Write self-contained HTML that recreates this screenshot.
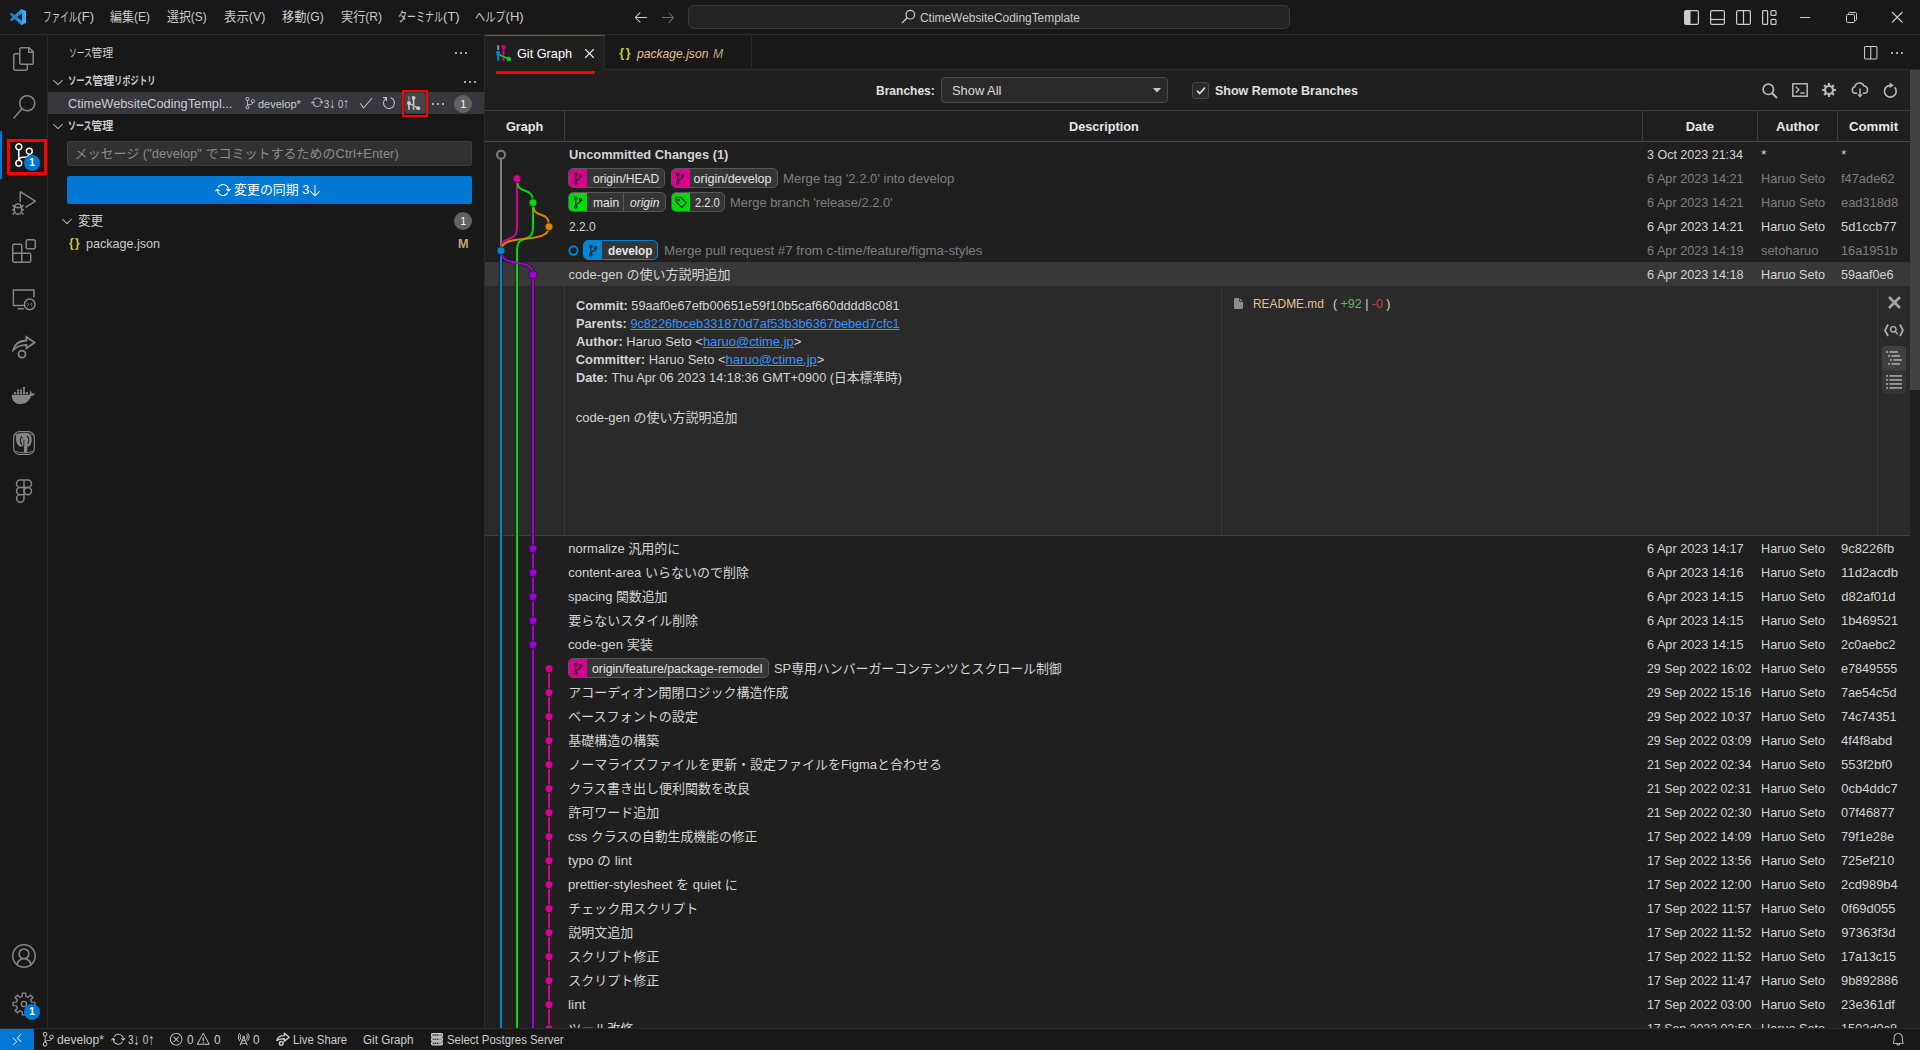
<!DOCTYPE html>
<html lang="ja"><head><meta charset="utf-8"><title>Git Graph - CtimeWebsiteCodingTemplate - Visual Studio Code</title><style>
*{box-sizing:border-box;margin:0;padding:0}
html,body{width:1920px;height:1050px;overflow:hidden;background:#181818}
body{position:relative;font-family:"Liberation Sans","Noto Sans CJK JP",sans-serif;font-size:13px;color:#cccccc}
.t{position:absolute;white-space:pre;transform-origin:0 50%;display:block}
.b{position:absolute}
svg{position:absolute;overflow:visible}
.ref{position:absolute;height:20px;border:1px solid #585858;border-radius:5px;background:#353535;overflow:hidden}
.ref i{position:absolute;left:0;top:0;bottom:0;width:18px}
.ref u{position:absolute;top:0;bottom:0;width:1px;background:#585858}
a{color:#3794ff;text-decoration:underline}
.ar{font-size:1.3em;line-height:0;position:relative;top:.03em}
</style></head><body>
<div class="b" style="left:0px;top:34px;width:1920px;height:1px;background:#2b2b2b;"></div>
<div class="b" style="left:47px;top:35px;width:1px;height:993px;background:#2b2b2b;"></div>
<div class="b" style="left:484px;top:35px;width:1px;height:993px;background:#2b2b2b;"></div>
<div class="b" style="left:485px;top:35px;width:1435px;height:35px;background:#181818;"></div>
<div class="b" style="left:485px;top:69px;width:1435px;height:1px;background:#2b2b2b;"></div>
<div class="b" style="left:485px;top:70px;width:1435px;height:958px;background:#1f1f1f;"></div>
<svg style="left:10px;top:9px;" width="16" height="16" viewBox="0 0 100 100"><defs><linearGradient id="vsg" x1="0" x2="1" y1="0" y2="0"><stop offset="0" stop-color="#1a7cc0"/><stop offset=".55" stop-color="#1f8fdc"/><stop offset="1" stop-color="#41b4ff"/></linearGradient></defs><path fill="url(#vsg)" fill-rule="evenodd" d="M70.9119 99.3171C72.4869 99.9307 74.2828 99.8914 75.8725 99.1264L96.4608 89.2197C98.6242 88.1787 100 85.9892 100 83.5872V16.4133C100 14.0113 98.6243 11.8218 96.4609 10.7808L75.8725 0.873756C73.7862 -0.130129 71.3446 0.11576 69.5135 1.44695C69.252 1.63711 69.0028 1.84943 68.769 2.08341L29.3551 38.0415L12.1872 25.0096C10.589 23.7965 8.35363 23.8959 6.86933 25.2461L1.36303 30.2549C-0.452552 31.9064 -0.454633 34.7627 1.35853 36.417L16.2471 50.0001L1.35853 63.5832C-0.454633 65.2374 -0.452552 68.0938 1.36303 69.7453L6.86933 74.7541C8.35363 76.1043 10.589 76.2037 12.1872 74.9905L29.3551 61.9587L68.769 97.9167C69.3925 98.5406 70.1246 99.0104 70.9119 99.3171ZM75.0152 27.2989L45.1091 50.0001L75.0152 72.7012V27.2989Z"/></svg>
<span class="t" style="left:43px;top:7.2px;line-height:20px;"><span style="display:inline-block;transform:scaleX(0.660);transform-origin:0 50%;margin-right:-17.66px">ファイル</span>(F)</span>
<span class="t" style="left:110px;top:7.2px;line-height:20px;transform:scaleX(0.9229);">編集(E)</span>
<span class="t" style="left:167px;top:7.2px;line-height:20px;transform:scaleX(0.9159);">選択(S)</span>
<span class="t" style="left:223.7px;top:7.2px;line-height:20px;transform:scaleX(0.9528);">表示(V)</span>
<span class="t" style="left:281.7px;top:7.2px;line-height:20px;transform:scaleX(0.9334);">移動(G)</span>
<span class="t" style="left:340.6px;top:7.2px;line-height:20px;transform:scaleX(0.9331);">実行(R)</span>
<span class="t" style="left:398px;top:7.2px;line-height:20px;"><span style="display:inline-block;transform:scaleX(0.693);transform-origin:0 50%;margin-right:-19.96px">ターミナル</span>(T)</span>
<span class="t" style="left:475px;top:7.2px;line-height:20px;"><span style="display:inline-block;transform:scaleX(0.783);transform-origin:0 50%;margin-right:-8.48px">ヘルプ</span>(H)</span>
<svg style="left:632.8px;top:9px;" width="16" height="16" viewBox="0 0 16 16"><path fill="#cccccc" fill-rule="evenodd" d="M7 3.093l-5 5V8.800l5 5 .707-.707-4.146-4.147H14v-1H3.560L7.707 3.800 7 3.093z"/></svg>
<svg style="left:659.5px;top:9px;" width="16" height="16" viewBox="0 0 16 16"><path fill="#6a6a6a" fill-rule="evenodd" d="M9 13.887l5-5V8.180l-5-5-.707.707 4.146 4.147H2v1h10.440L8.293 13.180l.707.707z"/></svg>
<div class="b" style="left:688px;top:5.4px;width:602px;height:23.3px;background:#242424;border:1px solid #3a3a3a;border-radius:6px;"></div>
<svg style="left:901px;top:9px;" width="15" height="15" viewBox="0 0 15 15"><circle cx="9.3" cy="5.700" r="4.300" fill="none" stroke="#cccccc" stroke-width="1.2"/><path d="M6.300 8.700 1 14" stroke="#cccccc" stroke-width="1.3" fill="none"/></svg>
<span class="t" style="left:920px;top:7.6px;line-height:20px;font-size:12px;transform:scaleX(0.9926);">CtimeWebsiteCodingTemplate</span>
<svg style="left:1684px;top:10px;" width="15" height="15" viewBox="0 0 15 15"><rect x=".6" y=".6" width="13.8" height="13.8" rx="1.5" fill="none" stroke="#cccccc" stroke-width="1.2"/><path d="M1 1h5.500v13H1z" fill="#cccccc"/></svg>
<svg style="left:1709.5px;top:10px;" width="15" height="15" viewBox="0 0 15 15"><rect x=".6" y=".6" width="13.8" height="13.8" rx="1.500" fill="none" stroke="#cccccc" stroke-width="1.2"/><path d="M.6 9.500h13.800" stroke="#cccccc" stroke-width="1.200"/></svg>
<svg style="left:1735.5px;top:10px;" width="15" height="15" viewBox="0 0 15 15"><rect x=".6" y=".6" width="13.800" height="13.800" rx="1.500" fill="none" stroke="#cccccc" stroke-width="1.200"/><path d="M7.500 .6v13.800" stroke="#cccccc" stroke-width="1.200"/></svg>
<svg style="left:1762px;top:10px;" width="15" height="15" viewBox="0 0 15 15"><rect x=".6" y=".6" width="5" height="13.800" rx="1" fill="none" stroke="#cccccc" stroke-width="1.200"/><rect x="9" y=".6" width="5" height="4.800" rx="1" fill="none" stroke="#cccccc" stroke-width="1.200"/><rect x="9" y="9.400" width="5" height="5" rx="1" fill="none" stroke="#cccccc" stroke-width="1.200"/></svg>
<svg style="left:1800px;top:17px;" width="10" height="1" viewBox="0 0 10 1"><rect width="10" height="1" fill="#cccccc"/></svg>
<svg style="left:1845.5px;top:12px;" width="11" height="11" viewBox="0 0 11 11"><rect x=".5" y="2.500" width="8" height="8" rx="1" fill="none" stroke="#cccccc"/><path d="M2.500 2.500v-1a1 1 0 0 1 1-1h6a1 1 0 0 1 1 1v6a1 1 0 0 1-1 1h-1" fill="none" stroke="#cccccc"/></svg>
<svg style="left:1892px;top:12px;" width="10.5" height="10.5" viewBox="0 0 10.5 10.5"><path d="M0 0l10.500 10.500M10.500 0 0 10.500" stroke="#cccccc" stroke-width="1.100"/></svg>
<svg style="left:12px;top:47px;" width="24" height="24" viewBox="0 0 24 24"><g fill="#868686" stroke="none"><path d="M17.5 0h-9L7 1.5V6H2.5L1 7.5v15.070L2.5 24h12.070L16 22.570V18h4.700l1.300-1.430V4.500L17.500 0zm0 2.120l2.380 2.380H17.500V2.120zm-3 20.380h-12v-15H7v9.070L8.500 18h6v4.500zm6-6h-12v-15H16V6h4.500v10.500z"/></g></svg>
<svg style="left:12px;top:95px;" width="24" height="24" viewBox="0 0 24 24"><g fill="#868686" stroke="none"><path d="M15.250 0a8.250 8.250 0 0 0-6.180 13.720L1 22.880l1.120 1 8.050-9.120A8.251 8.251 0 1 0 15.250.010V0zm0 15a6.750 6.750 0 1 1 0-13.500 6.750 6.750 0 0 1 0 13.500z"/></g></svg>
<div class="b" style="left:0px;top:131px;width:2px;height:48px;background:#0078d4;"></div>
<svg style="left:12px;top:143px;" width="24" height="24" viewBox="0 0 24 24"><g fill="#ffffff" stroke="none"><path d="M21.007 8.222A3.738 3.738 0 0 0 15.045 5.200a3.737 3.737 0 0 0 1.156 6.583 2.988 2.988 0 0 1-2.668 1.670h-2.990a4.456 4.456 0 0 0-2.989 1.165V7.400a3.737 3.737 0 1 0-1.494 0v9.117a3.776 3.776 0 1 0 1.816.099 2.990 2.990 0 0 1 2.668-1.667h2.990a4.484 4.484 0 0 0 4.223-3.039 3.736 3.736 0 0 0 3.250-3.687zM4.565 3.738a2.242 2.242 0 1 1 4.484 0 2.242 2.242 0 0 1-4.484 0zm4.484 16.441a2.242 2.242 0 1 1-4.484 0 2.242 2.242 0 0 1 4.484 0zm8.221-9.715a2.242 2.242 0 1 1 0-4.485 2.242 2.242 0 0 1 0 4.485z"/></g></svg>
<div class="b" style="left:24px;top:155px;width:16px;height:16px;background:#0078d4;border-radius:8px;"></div>
<span class="t" style="left:29.3px;top:157.4px;line-height:12px;font-size:10px;color:#ffffff;font-weight:bold;">1</span>
<div class="b" style="left:7px;top:139px;width:40px;height:36px;border:3px solid #ff0000;"></div>
<svg style="left:12px;top:191px;" width="24" height="24" viewBox="0 0 24 24"><g fill="#868686" stroke="none"><path d="M10.940 13.500l-1.320 1.320a3.730 3.730 0 0 0-7.240 0L1.060 13.500 0 14.560l1.720 1.720-.220.220V18H0v1.500h1.500v.080c.077.489.214.966.410 1.420L0 22.940 1.060 24l1.650-1.650A4.308 4.308 0 0 0 6 24a4.310 4.310 0 0 0 3.290-1.650L10.940 24 12 22.940 10.090 21c.198-.464.336-.951.410-1.450v-.100H12V18h-1.500v-1.500l-.220-.220L12 14.560l-1.060-1.060zM6 13.500a2.250 2.250 0 0 1 2.250 2.250h-4.500A2.250 2.250 0 0 1 6 13.500zm3 6a3.330 3.330 0 0 1-3 3 3.330 3.330 0 0 1-3-3v-2.250h6v2.250zm14.760-9.900v1.260L13.500 17.370V15.600l8.500-5.370L9 2v9.460a5.070 5.070 0 0 0-1.500-.720V.630L8.640 0l15.120 9.600z"/></g></svg>
<svg style="left:12px;top:239px;" width="24" height="24" viewBox="0 0 24 24"><g fill="#868686" stroke="none"><path d="M13.500 1.500L15 0h7.500L24 1.500V9l-1.500 1.500H15L13.500 9V1.500zm1.500 0V9h7.500V1.500H15zM0 15V6l1.500-1.500H9L10.500 6v7.500H18l1.500 1.500v7.500L18 24H1.500L0 22.500V15zm9-1.500V6H1.500v7.500H9zM9 15H1.500v7.500H9V15zm1.500 7.500H18V15h-7.500v7.500z"/></g></svg>
<svg style="left:12px;top:287px;" width="24" height="24" viewBox="0 0 24 24"><g fill="none" stroke="#868686" stroke-width="1.500"><path d="M11.800 18.400H1.400V2.900h20.600v7.300"/><path d="M5.500 21.700h6.300"/><circle cx="17.700" cy="17.400" r="5.300"/><path d="M15.200 15.900l1.600 1.500-1.600 1.500M20.200 15.900l-1.600 1.500 1.600 1.500" stroke-width="1"/></g></svg>
<svg style="left:12px;top:335px;" width="24" height="24" viewBox="0 0 24 24"><g fill="none" stroke="#868686" stroke-width="1.800" stroke-linejoin="miter"><path d="M1.300 15C2.500 9.500 7 5.800 14.400 5.500V1.900l8.200 5.500-8.200 5.800V9.900C8.500 10.100 4.500 11.800 1.300 15z"/><circle cx="10" cy="19.200" r="3.500"/></g></svg>
<svg style="left:11px;top:386px;" width="26" height="19" viewBox="0 0 26 19"><g fill="#868686"><path d="M.700 8.700h17.800c.800-1.300.800-3.200.200-4.600 1.300.900 1.900 2 2 3.200 1.200-.300 2.500-.100 3.400.500-.700 1.600-2.200 2.300-4 2.200C18.500 14.700 15 18 9.500 18 4 18 .500 14.500.700 8.700z"/><rect x="3" y="6.100" width="2.150" height="2.050"/><rect x="5.95" y="6.100" width="2.150" height="2.050"/><rect x="8.9" y="6.100" width="2.150" height="2.050"/><rect x="11.85" y="6.100" width="2.150" height="2.050"/><rect x="14.8" y="6.100" width="2.150" height="2.050"/><rect x="5.95" y="3.600" width="2.150" height="2.050"/><rect x="8.9" y="3.600" width="2.150" height="2.050"/><rect x="11.85" y="3.600" width="2.150" height="2.050"/><rect x="11.85" y="1" width="2.150" height="2.150"/></g></svg>
<svg style="left:13px;top:431px;" width="22" height="24" viewBox="0 0 22 24"><g fill="none" stroke="#868686" stroke-width="1.200"><rect x=".700" y=".700" width="20.600" height="22.600" rx="5.500"/><path d="M1.200 4.500C4 1.800 18 1.800 20.800 4.500M1.200 19.500C4 22.200 18 22.200 20.800 19.500" stroke-width=".900"/></g><path fill="#868686" d="M3 5.500C3 3 6 2.300 9 3c2-.900 5-.900 7 .300 3 1.200 3.500 5.200 2 9.200-.500 2-1.500 3-2.500 3-.600 0-1-.500-1-1.500l-.300 6c0 2-3.200 2-3.200 0L10.800 14c-1.300 1.500-3.300 2-4.300 1.500C4 14 2.500 9.500 3 5.500z"/><g fill="none" stroke="#181818" stroke-width="1.100" stroke-linecap="round"><path d="M8.600 5.500C7 7.500 7 11 8.700 13.500"/><path d="M14.300 5.300c1.600 1.500 1.800 4.700.500 7.500"/><path d="M10.900 14.500V9.500" stroke-width=".800"/></g><circle cx="9.800" cy="7" r=".600" fill="#181818"/></svg>
<svg style="left:15px;top:479px;" width="18" height="24" viewBox="0 0 18 24"><g fill="none" stroke="#868686" stroke-width="1.500"><path d="M9 1H5.200a3.700 3.700 0 0 0 0 7.400H9zM9 1h3.800a3.700 3.700 0 0 1 0 7.400H9zM9 8.400H5.200a3.700 3.700 0 0 0 0 7.400H9zM9 15.800H5.200A3.700 3.700 0 1 0 9 19.500z"/><circle cx="12.800" cy="12.100" r="3.700"/></g></svg>
<svg style="left:12px;top:944px;" width="24" height="24" viewBox="0 0 16 16"><path fill="#868686" fill-rule="evenodd" d="M16 7.992C16 3.580 12.416 0 8 0S0 3.580 0 7.992c0 2.430 1.104 4.620 2.832 6.090.016.016.032.016.032.032.144.112.288.224.448.336.080.048.144.111.224.175A7.980 7.980 0 0 0 8.016 16a7.980 7.980 0 0 0 4.480-1.375c.080-.048.144-.111.224-.160.144-.111.304-.223.448-.335.016-.016.032-.016.032-.032 1.696-1.487 2.800-3.676 2.800-6.106zm-8 7.001c-1.504 0-2.880-.480-4.016-1.279.016-.128.048-.255.080-.383a4.170 4.170 0 0 1 .416-.991c.176-.304.384-.576.640-.816.240-.240.528-.463.816-.639.304-.176.624-.304.976-.400A4.150 4.150 0 0 1 8 10.342a4.185 4.185 0 0 1 2.928 1.166c.368.368.656.800.864 1.295.112.288.192.592.240.911A7.030 7.030 0 0 1 8 14.993zm-2.448-7.400a2.490 2.490 0 0 1-.208-1.024c0-.351.064-.703.208-1.023.144-.320.336-.607.576-.847.240-.240.528-.431.848-.575.320-.144.672-.208 1.024-.208.368 0 .704.064 1.024.208.320.144.608.336.848.575.240.240.432.528.576.847.144.320.208.672.208 1.023 0 .368-.064.704-.208 1.023a2.840 2.840 0 0 1-.576.848 2.840 2.840 0 0 1-.848.575 2.715 2.715 0 0 1-2.064 0 2.840 2.840 0 0 1-.848-.575 2.526 2.526 0 0 1-.560-.848zm7.424 5.306c0-.032-.016-.048-.016-.080a5.220 5.220 0 0 0-.688-1.406 4.883 4.883 0 0 0-1.088-1.135 5.207 5.207 0 0 0-1.040-.608 2.820 2.820 0 0 0 .464-.383 4.200 4.200 0 0 0 .624-.784 3.624 3.624 0 0 0 .528-1.934 3.710 3.710 0 0 0-.288-1.470 3.799 3.799 0 0 0-.816-1.199 3.845 3.845 0 0 0-1.200-.800 3.720 3.720 0 0 0-1.472-.287 3.720 3.720 0 0 0-1.472.288 3.631 3.631 0 0 0-1.200.815 3.840 3.840 0 0 0-.800 1.199 3.710 3.710 0 0 0-.288 1.470c0 .352.048.688.144 1.007.096.336.224.640.400.927.160.288.384.544.624.784.144.144.304.271.480.383a5.120 5.120 0 0 0-1.040.624c-.416.320-.784.703-1.088 1.119a4.999 4.999 0 0 0-.688 1.406c-.016.032-.016.064-.016.080C1.776 11.636.992 9.910.992 7.992.992 4.140 4.144.991 8 .991s7.008 3.149 7.008 7.001a6.960 6.960 0 0 1-2.032 4.907z"/></svg>
<svg style="left:12px;top:992px;" width="24" height="24" viewBox="0 0 24 24"><g fill="none" stroke="#868686" stroke-width="1.400" stroke-linejoin="round"><path d="M19.57 10.12L22.88 10.36L22.88 13.64L19.57 13.88L18.68 16.02L20.85 18.54L18.54 20.85L16.02 18.68L13.88 19.57L13.64 22.88L10.36 22.88L10.12 19.57L7.98 18.68L5.46 20.85L3.15 18.54L5.32 16.02L4.43 13.88L1.12 13.64L1.12 10.36L4.43 10.12L5.32 7.98L3.15 5.46L5.46 3.15L7.98 5.32L10.12 4.43L10.36 1.12L13.64 1.12L13.88 4.43L16.02 5.32L18.54 3.15L20.85 5.46L18.68 7.98Z"/><circle cx="12" cy="12" r="2.600"/></g></svg>
<div class="b" style="left:24px;top:1004px;width:16px;height:16px;background:#0078d4;border-radius:8px;"></div>
<span class="t" style="left:29.3px;top:1006.4px;line-height:12px;font-size:10px;color:#ffffff;font-weight:bold;">1</span>
<span class="t" style="left:68.6px;top:43.1px;line-height:20px;font-size:11px;"><span style="display:inline-block;transform:scaleX(0.705);transform-origin:0 50%;margin-right:-9.73px">ソース</span>管理</span>
<svg style="left:453px;top:45px;" width="16" height="16" viewBox="0 0 16 16"><circle cx="3" cy="8" r="1.050" fill="#cccccc"/><circle cx="8" cy="8" r="1.050" fill="#cccccc"/><circle cx="13" cy="8" r="1.050" fill="#cccccc"/></svg>
<svg style="left:50px;top:73.5px;" width="16" height="16" viewBox="0 0 16 16"><path d="M7.976 10.072l4.357-4.357.620.618L8.284 11h-.618L3 6.333l.619-.618 4.357 4.357z" fill="#cccccc"/></svg>
<span class="t" style="left:68px;top:71.1px;line-height:20px;font-size:11px;font-weight:bold;"><span style="display:inline-block;transform:scaleX(0.754);transform-origin:0 50%;margin-right:-8.11px">ソース</span>管理<span style="display:inline-block;transform:scaleX(0.754);transform-origin:0 50%;margin-right:-13.52px">リポジトリ</span></span>
<svg style="left:462px;top:73.5px;" width="16" height="16" viewBox="0 0 16 16"><circle cx="3" cy="8" r="1.050" fill="#cccccc"/><circle cx="8" cy="8" r="1.050" fill="#cccccc"/><circle cx="13" cy="8" r="1.050" fill="#cccccc"/></svg>
<div class="b" style="left:48px;top:92px;width:436px;height:22px;background:#37373d;"></div>
<span class="t" style="left:68px;top:93.6px;line-height:20px;transform:scaleX(0.9821);">CtimeWebsiteCodingTempl...</span>
<svg style="left:243.5px;top:97.3px;" width="12.3" height="12.3" viewBox="0 0 24 24"><path fill="#cccccc" fill-rule="evenodd" d="M21.007 8.222A3.738 3.738 0 0 0 15.045 5.200a3.737 3.737 0 0 0 1.156 6.583 2.988 2.988 0 0 1-2.668 1.670h-2.990a4.456 4.456 0 0 0-2.989 1.165V7.400a3.737 3.737 0 1 0-1.494 0v9.117a3.776 3.776 0 1 0 1.816.099 2.990 2.990 0 0 1 2.668-1.667h2.990a4.484 4.484 0 0 0 4.223-3.039 3.736 3.736 0 0 0 3.250-3.687zM4.565 3.738a2.242 2.242 0 1 1 4.484 0 2.242 2.242 0 0 1-4.484 0zm4.484 16.441a2.242 2.242 0 1 1-4.484 0 2.242 2.242 0 0 1 4.484 0zm8.221-9.715a2.242 2.242 0 1 1 0-4.485 2.242 2.242 0 0 1 0 4.485z"/></svg>
<span class="t" style="left:258px;top:93.6px;line-height:20px;font-size:11px;">develop*</span>
<svg style="left:310.6px;top:96.3px;" width="12.6" height="12.6" viewBox="0 0 16 16"><path fill="#cccccc" fill-rule="evenodd" d="M2.006 8.267L.78 9.5 0 8.73l2.09-2.07.76.01 2.09 2.12-.76.76-1.167-1.18a5 5 0 0 0 9.4 1.983l.813.597a6 6 0 0 1-11.22-2.683zm10.99-.466L11.76 6.55l-.76.76 2.09 2.11.76.01 2.09-2.07-.75-.76-1.194 1.18a6 6 0 0 0-11.11-2.92l.81.594a5 5 0 0 1 9.3 2.346z"/></svg>
<span class="t" style="left:324.4px;top:93.6px;line-height:20px;font-size:11px;transform:scaleX(0.8506);">3<span class="ar">↓</span> 0<span class="ar">↑</span></span>
<svg style="left:357.6px;top:94.7px;" width="16" height="16" viewBox="0 0 16 16"><path fill="#cccccc" fill-rule="evenodd" d="M14.431 3.323l-8.47 10-.79-.036-3.35-4.77.818-.574 2.978 4.24 8.051-9.506.764.646z"/></svg>
<svg style="left:381px;top:94.7px;" width="16" height="16" viewBox="0 0 16 16"><path fill="#cccccc" fill-rule="evenodd" d="M4.681 3H2V2h3.5l.5.5V6H5V4a5 5 0 1 0 4.530-.761l.302-.954A6 6 0 1 1 4.681 3z"/></svg>
<div class="b" style="left:405px;top:93px;width:20px;height:20px;background:#45454a;border-radius:3px;"></div>
<svg style="left:407.2px;top:96px;" width="14" height="14" viewBox="0 0 16 16"><path d="M2.200 .200v4.700" stroke="#8a8a8a" stroke-width="1.800"/><path d="M2.200 7.900v7.900" stroke="#d0d0d0" stroke-width="1.800"/><path d="M7.500 2v8.300M7.500 12.300v3.500" stroke="#d0d0d0" stroke-width="1.800"/><path d="M3.200 8.800l9.600 5.100" stroke="#d0d0d0" stroke-width="1.400"/><circle cx="2.200" cy="7.900" r="2.200" fill="#d0d0d0"/><circle cx="7.500" cy="2.100" r="2.150" fill="#d0d0d0"/><circle cx="12.800" cy="13.900" r="2.200" fill="#d0d0d0"/></svg>
<div class="b" style="left:402px;top:90px;width:26px;height:26.5px;border:2.500px solid #ff0000;"></div>
<svg style="left:430px;top:95.5px;" width="16" height="16" viewBox="0 0 16 16"><circle cx="3" cy="8" r="1.050" fill="#cccccc"/><circle cx="8" cy="8" r="1.050" fill="#cccccc"/><circle cx="13" cy="8" r="1.050" fill="#cccccc"/></svg>
<div class="b" style="left:454px;top:94.5px;width:18px;height:18px;background:#616161;border-radius:9px;"></div>
<span class="t" style="left:460.2px;top:96.6px;line-height:14px;font-size:11px;color:#f8f8f8;">1</span>
<svg style="left:50px;top:118px;" width="16" height="16" viewBox="0 0 16 16"><path d="M7.976 10.072l4.357-4.357.620.618L8.284 11h-.618L3 6.333l.619-.618 4.357 4.357z" fill="#cccccc"/></svg>
<span class="t" style="left:68px;top:116.1px;line-height:20px;font-size:11px;font-weight:bold;"><span style="display:inline-block;transform:scaleX(0.723);transform-origin:0 50%;margin-right:-9.13px">ソース</span>管理</span>
<div class="b" style="left:67px;top:140.5px;width:405px;height:25.3px;background:#313131;border:1px solid #3c3c3c;border-radius:2px;"></div>
<span class="t" style="left:74.5px;top:143.5px;line-height:20px;color:#8c8c8c;">メッセージ ("develop" でコミットするためのCtrl+Enter)</span>
<div class="b" style="left:67px;top:176px;width:405px;height:28px;background:#0078d4;border-radius:2px;"></div>
<svg style="left:214.8px;top:182px;" width="16" height="16" viewBox="0 0 16 16"><path fill="#ffffff" fill-rule="evenodd" d="M2.006 8.267L.78 9.5 0 8.73l2.09-2.07.76.01 2.09 2.12-.76.76-1.167-1.18a5 5 0 0 0 9.4 1.983l.813.597a6 6 0 0 1-11.22-2.683zm10.99-.466L11.76 6.55l-.76.76 2.09 2.11.76.01 2.09-2.07-.75-.76-1.194 1.18a6 6 0 0 0-11.11-2.92l.81.594a5 5 0 0 1 9.3 2.346z"/></svg>
<span class="t" style="left:234.4px;top:180.1px;line-height:20px;color:#ffffff;transform:scaleX(0.9955);">変更の同期 3</span>
<svg style="left:306.8px;top:182.5px;" width="15" height="15" viewBox="0 0 16 16"><path fill="#ffffff" fill-rule="evenodd" d="M3.147 9l5 5h.707l5-5-.707-.707-4.147 4.147V2h-1v10.440L3.854 8.293 3.147 9z"/></svg>
<svg style="left:59px;top:213px;" width="16" height="16" viewBox="0 0 16 16"><path d="M7.976 10.072l4.357-4.357.620.618L8.284 11h-.618L3 6.333l.619-.618 4.357 4.357z" fill="#cccccc"/></svg>
<span class="t" style="left:78.4px;top:210.8px;line-height:20px;transform:scaleX(0.9686);">変更</span>
<div class="b" style="left:454px;top:211.7px;width:18px;height:18px;background:#616161;border-radius:9px;"></div>
<span class="t" style="left:460.2px;top:213.8px;line-height:14px;font-size:11px;color:#f8f8f8;">1</span>
<span class="t" style="left:68.6px;top:232.9px;line-height:20px;font-size:12.5px;color:#cbcb41;font-weight:bold;transform:scaleX(0.9502);letter-spacing:1.500px;">{}</span>
<span class="t" style="left:86px;top:233.5px;line-height:20px;transform:scaleX(0.9657);">package.json</span>
<span class="t" style="left:458.4px;top:233.5px;line-height:20px;font-size:12px;color:#bda57c;font-weight:bold;transform:scaleX(1.0600);">M</span>
<div class="b" style="left:485px;top:35px;width:120px;height:35px;background:#1f1f1f;border-top:1px solid #0078d4;border-right:1px solid #2b2b2b;"></div>
<div class="b" style="left:751px;top:35px;width:1px;height:34px;background:#2b2b2b;"></div>
<svg style="left:495.5px;top:45px;" width="16" height="16" viewBox="0 0 16 16"><path d="M2.200 .200v4.700" stroke="#9a9a9a" stroke-width="1.900"/><path d="M2.200 7.900v7.900" stroke="#0085d9" stroke-width="1.900"/><path d="M7.500 2v8.300M7.500 12.300v3.500" stroke="#d9008f" stroke-width="1.900"/><path d="M3.500 9.700l9.300 4.200" stroke="#00d90a" stroke-width="1.700"/><circle cx="2.200" cy="7.900" r="2.200" fill="#0085d9"/><circle cx="7.500" cy="2.100" r="2.150" fill="#d9008f"/><circle cx="12.800" cy="13.900" r="2.200" fill="#00d90a"/></svg>
<span class="t" style="left:517.2px;top:43.9px;line-height:20px;color:#ffffff;transform:scaleX(0.9759);">Git Graph</span>
<svg style="left:581.3px;top:44.5px;" width="17" height="17" viewBox="0 0 16 16"><path fill="#ffffff" fill-rule="evenodd" d="M8 8.707l3.646 3.647.708-.707L8.707 8l3.647-3.646-.707-.708L8 7.293 4.354 3.646l-.707.708L7.293 8l-3.646 3.646.707.708L8 8.707z"/></svg>
<div class="b" style="left:496px;top:71px;width:99.2px;height:3px;background:#ff0000;"></div>
<span class="t" style="left:619.3px;top:43.2px;line-height:20px;font-size:12.5px;color:#cbcb41;font-weight:bold;letter-spacing:1.500px;">{}</span>
<span class="t" style="left:636.8px;top:43.9px;line-height:20px;color:#e2c08d;font-style:italic;transform:scaleX(0.9318);">package.json</span>
<span class="t" style="left:713.3px;top:43.9px;line-height:20px;font-size:12px;color:#b8a57e;font-style:italic;transform:scaleX(1.0200);">M</span>
<svg style="left:1862.3px;top:44.8px;" width="16.5" height="16.5" viewBox="0 0 16 16"><path fill="#d0d0d0" fill-rule="evenodd" d="M14 1H3L2 2v11l1 1h11l1-1V2l-1-1zM8 13H3V2h5v11zm6 0H9V2h5v11z"/></svg>
<svg style="left:1889.3px;top:45px;" width="16" height="16" viewBox="0 0 16 16"><circle cx="3" cy="8" r="1.050" fill="#cccccc"/><circle cx="8" cy="8" r="1.050" fill="#cccccc"/><circle cx="13" cy="8" r="1.050" fill="#cccccc"/></svg>
<span class="t" style="left:875.7px;top:80.9px;line-height:20px;color:#e0e0e0;font-weight:bold;transform:scaleX(0.9248);">Branches:</span>
<div class="b" style="left:941px;top:77px;width:227px;height:25.5px;background:#2a2a2a;border:1px solid #4a4a4a;border-radius:4px;"></div>
<span class="t" style="left:952px;top:80.6px;line-height:20px;color:#dddddd;transform:scaleX(0.9905);">Show All</span>
<svg style="left:1153px;top:87.5px;" width="8" height="5" viewBox="0 0 8 5"><path d="M0 0h8L4 4.500z" fill="#c8c8c8"/></svg>
<div class="b" style="left:1192px;top:82px;width:16.5px;height:16.5px;background:#2a2a2a;border:1px solid #4a4a4a;border-radius:3px;"></div>
<svg style="left:1195.5px;top:86px;" width="10" height="9" viewBox="0 0 10 9"><path d="M1 4.700l2.700 2.800L9 1.500" fill="none" stroke="#e0e0e0" stroke-width="1.700"/></svg>
<span class="t" style="left:1214.8px;top:80.9px;line-height:20px;color:#e0e0e0;font-weight:bold;transform:scaleX(0.9608);">Show Remote Branches</span>
<svg style="left:1762px;top:83px;" width="16" height="16" viewBox="0 0 16 16"><circle cx="6.300" cy="6.300" r="5.200" fill="none" stroke="#b8b8b8" stroke-width="1.700"/><path d="M10 10l5 5" stroke="#b8b8b8" stroke-width="2.100"/></svg>
<svg style="left:1792px;top:83px;" width="16" height="14" viewBox="0 0 16 14"><rect x=".800" y=".800" width="14.400" height="12.400" fill="none" stroke="#b8b8b8" stroke-width="1.500"/><path d="M3.800 3.800l3 3-3 3M8.300 10h4.300" fill="none" stroke="#b8b8b8" stroke-width="1.400"/></svg>
<svg style="left:1822px;top:83px;" width="14" height="14" viewBox="0 0 14 14"><path fill-rule="evenodd" fill="#b8b8b8" d="M11.98 5.89L13.91 5.90L13.91 8.10L11.98 8.11L11.31 9.73L12.66 11.11L11.11 12.66L9.73 11.31L8.11 11.98L8.10 13.91L5.90 13.91L5.89 11.98L4.27 11.31L2.89 12.66L1.34 11.11L2.69 9.73L2.02 8.11L0.09 8.10L0.09 5.90L2.02 5.89L2.69 4.27L1.34 2.89L2.89 1.34L4.27 2.69L5.89 2.02L5.90 0.09L8.10 0.09L8.11 2.02L9.73 2.69L11.11 1.34L12.66 2.89L11.31 4.27Z M7 4.100a2.900 2.900 0 1 0 0 5.800 2.900 2.900 0 0 0 0-5.800z"/></svg>
<svg style="left:1851px;top:82px;" width="18" height="16" viewBox="0 0 18 16"><g fill="none" stroke="#b8b8b8" stroke-width="1.500"><path d="M6.300 11.300H4.300A3.300 3.300 0 0 1 3.800 4.800 4.800 4.800 0 0 1 13 4.100 3.700 3.700 0 0 1 14 11.300h-2.300"/><path d="M9 6.500v7.500"/></g><path d="M6.300 12.500h5.400L9 15.800z" fill="#b8b8b8"/></svg>
<svg style="left:1883px;top:82px;" width="15" height="16" viewBox="0 0 15 16"><g fill="none" stroke="#b8b8b8" stroke-width="1.700"><path d="M11.700 5.200A5.900 5.900 0 1 1 6.800 3.300"/></g><path d="M6.600 .400 10.800 3.300 6.600 6.200z" fill="#b8b8b8"/></svg>
<div class="b" style="left:485px;top:110px;width:1425px;height:1px;background:#3c3c3c;"></div>
<div class="b" style="left:564px;top:111px;width:1px;height:30px;background:#3c3c3c;"></div>
<div class="b" style="left:1642px;top:111px;width:1px;height:30px;background:#3c3c3c;"></div>
<div class="b" style="left:1757px;top:111px;width:1px;height:30px;background:#3c3c3c;"></div>
<div class="b" style="left:1837px;top:111px;width:1px;height:30px;background:#3c3c3c;"></div>
<div class="b" style="left:485px;top:141px;width:1425px;height:1px;background:#4a4a4a;"></div>
<span class="t" style="left:506px;top:116.9px;line-height:20px;color:#e7e7e7;font-weight:bold;transform:scaleX(0.9740);">Graph</span>
<span class="t" style="left:1068.6px;top:116.9px;line-height:20px;color:#e7e7e7;font-weight:bold;transform:scaleX(0.9760);">Description</span>
<span class="t" style="left:1685.7px;top:116.9px;line-height:20px;color:#e7e7e7;font-weight:bold;">Date</span>
<span class="t" style="left:1775.7px;top:116.9px;line-height:20px;color:#e7e7e7;font-weight:bold;transform:scaleX(1.0162);">Author</span>
<span class="t" style="left:1849.2px;top:116.9px;line-height:20px;color:#e7e7e7;font-weight:bold;transform:scaleX(1.0167);">Commit</span>
<div class="b" style="left:1910px;top:70px;width:10px;height:958px;background:#1f1f1f;"></div>
<div class="b" style="left:1910px;top:70px;width:10px;height:320px;background:#424242;"></div>
<div class="b" style="left:485px;top:262px;width:1425px;height:24px;background:#383838;"></div>
<div class="b" style="left:485px;top:286px;width:1425px;height:250px;background:#2a2a2a;"></div>
<div class="b" style="left:564px;top:286px;width:1px;height:249px;background:#3a3a3a;"></div>
<div class="b" style="left:1221px;top:286px;width:1px;height:249px;background:#3a3a3a;"></div>
<div class="b" style="left:1877px;top:286px;width:1px;height:249px;background:#3a3a3a;"></div>
<div class="b" style="left:485px;top:535px;width:1425px;height:1px;background:#3f3f3f;"></div>
<span class="t" style="left:568.6px;top:145.1px;line-height:20px;color:#d4d4d4;font-weight:bold;transform:scaleX(0.9896);">Uncommitted Changes (1)</span>
<span class="t" style="left:1646.7px;top:145.1px;line-height:20px;color:#d4d4d4;transform:scaleX(0.9624);">3 Oct 2023 21:34</span>
<span class="t" style="left:1761px;top:145.1px;line-height:20px;color:#d4d4d4;transform:scaleX(1.0864);">*</span>
<span class="t" style="left:1841.3px;top:145.1px;line-height:20px;color:#d4d4d4;">*</span>
<span class="t" style="left:782.7px;top:169.1px;line-height:20px;color:#7f7f7f;transform:scaleX(1.0091);">Merge tag '2.2.0' into develop</span>
<span class="t" style="left:1646.7px;top:169.1px;line-height:20px;color:#7f7f7f;transform:scaleX(0.9754);">6 Apr 2023 14:21</span>
<span class="t" style="left:1761px;top:169.1px;line-height:20px;color:#7f7f7f;transform:scaleX(0.9732);">Haruo Seto</span>
<span class="t" style="left:1841.3px;top:169.1px;line-height:20px;color:#7f7f7f;transform:scaleX(0.9875);">f47ade62</span>
<span class="t" style="left:730.3px;top:193.1px;line-height:20px;color:#7f7f7f;transform:scaleX(0.9924);">Merge branch 'release/2.2.0'</span>
<span class="t" style="left:1646.7px;top:193.1px;line-height:20px;color:#7f7f7f;transform:scaleX(0.9754);">6 Apr 2023 14:21</span>
<span class="t" style="left:1761px;top:193.1px;line-height:20px;color:#7f7f7f;transform:scaleX(0.9732);">Haruo Seto</span>
<span class="t" style="left:1841.3px;top:193.1px;line-height:20px;color:#7f7f7f;transform:scaleX(0.9877);">ead318d8</span>
<span class="t" style="left:568.6px;top:217.1px;line-height:20px;color:#d4d4d4;transform:scaleX(0.9197);">2.2.0</span>
<span class="t" style="left:1646.7px;top:217.1px;line-height:20px;color:#d4d4d4;transform:scaleX(0.9754);">6 Apr 2023 14:21</span>
<span class="t" style="left:1761px;top:217.1px;line-height:20px;color:#d4d4d4;transform:scaleX(0.9732);">Haruo Seto</span>
<span class="t" style="left:1841.3px;top:217.1px;line-height:20px;color:#d4d4d4;transform:scaleX(0.9882);">5d1ccb77</span>
<span class="t" style="left:663.6px;top:241.1px;line-height:20px;color:#7f7f7f;transform:scaleX(1.0225);">Merge pull request #7 from c-time/feature/figma-styles</span>
<span class="t" style="left:1646.7px;top:241.1px;line-height:20px;color:#7f7f7f;transform:scaleX(0.9754);">6 Apr 2023 14:19</span>
<span class="t" style="left:1761px;top:241.1px;line-height:20px;color:#7f7f7f;transform:scaleX(0.9909);">setoharuo</span>
<span class="t" style="left:1841.3px;top:241.1px;line-height:20px;color:#7f7f7f;transform:scaleX(0.9803);">16a1951b</span>
<span class="t" style="left:568.6px;top:265.1px;line-height:20px;color:#d4d4d4;">code-gen の使い方説明追加</span>
<span class="t" style="left:1646.7px;top:265.1px;line-height:20px;color:#d4d4d4;transform:scaleX(0.9754);">6 Apr 2023 14:18</span>
<span class="t" style="left:1761px;top:265.1px;line-height:20px;color:#d4d4d4;transform:scaleX(0.9732);">Haruo Seto</span>
<span class="t" style="left:1841.3px;top:265.1px;line-height:20px;color:#d4d4d4;transform:scaleX(0.9686);">59aaf0e6</span>
<span class="t" style="left:568.3px;top:539.1px;line-height:20px;color:#d4d4d4;">normalize 汎用的に</span>
<span class="t" style="left:1646.7px;top:539.1px;line-height:20px;color:#d4d4d4;transform:scaleX(0.9754);">6 Apr 2023 14:17</span>
<span class="t" style="left:1761px;top:539.1px;line-height:20px;color:#d4d4d4;transform:scaleX(0.9732);">Haruo Seto</span>
<span class="t" style="left:1841.3px;top:539.1px;line-height:20px;color:#d4d4d4;transform:scaleX(0.9935);">9c8226fb</span>
<span class="t" style="left:568.3px;top:563.1px;line-height:20px;color:#d4d4d4;">content-area いらないので削除</span>
<span class="t" style="left:1646.7px;top:563.1px;line-height:20px;color:#d4d4d4;transform:scaleX(0.9754);">6 Apr 2023 14:16</span>
<span class="t" style="left:1761px;top:563.1px;line-height:20px;color:#d4d4d4;transform:scaleX(0.9732);">Haruo Seto</span>
<span class="t" style="left:1841.3px;top:563.1px;line-height:20px;color:#d4d4d4;transform:scaleX(1.0146);">11d2acdb</span>
<span class="t" style="left:568.3px;top:587.1px;line-height:20px;color:#d4d4d4;transform:scaleX(0.9898);">spacing 関数追加</span>
<span class="t" style="left:1646.7px;top:587.1px;line-height:20px;color:#d4d4d4;transform:scaleX(0.9754);">6 Apr 2023 14:15</span>
<span class="t" style="left:1761px;top:587.1px;line-height:20px;color:#d4d4d4;transform:scaleX(0.9732);">Haruo Seto</span>
<span class="t" style="left:1841.3px;top:587.1px;line-height:20px;color:#d4d4d4;">d82af01d</span>
<span class="t" style="left:568.3px;top:611.1px;line-height:20px;color:#d4d4d4;">要らないスタイル削除</span>
<span class="t" style="left:1646.7px;top:611.1px;line-height:20px;color:#d4d4d4;transform:scaleX(0.9754);">6 Apr 2023 14:15</span>
<span class="t" style="left:1761px;top:611.1px;line-height:20px;color:#d4d4d4;transform:scaleX(0.9732);">Haruo Seto</span>
<span class="t" style="left:1841.3px;top:611.1px;line-height:20px;color:#d4d4d4;transform:scaleX(0.9870);">1b469521</span>
<span class="t" style="left:568.3px;top:635.1px;line-height:20px;color:#d4d4d4;transform:scaleX(1.0140);">code-gen 実装</span>
<span class="t" style="left:1646.7px;top:635.1px;line-height:20px;color:#d4d4d4;transform:scaleX(0.9754);">6 Apr 2023 14:15</span>
<span class="t" style="left:1761px;top:635.1px;line-height:20px;color:#d4d4d4;transform:scaleX(0.9732);">Haruo Seto</span>
<span class="t" style="left:1841.3px;top:635.1px;line-height:20px;color:#d4d4d4;transform:scaleX(0.9663);">2c0aebc2</span>
<span class="t" style="left:774px;top:659.1px;line-height:20px;color:#d4d4d4;transform:scaleX(0.9909);">SP専用ハンバーガーコンテンツとスクロール制御</span>
<span class="t" style="left:1646.7px;top:659.1px;line-height:20px;color:#d4d4d4;transform:scaleX(0.9500);">29 Sep 2022 16:02</span>
<span class="t" style="left:1761px;top:659.1px;line-height:20px;color:#d4d4d4;transform:scaleX(0.9732);">Haruo Seto</span>
<span class="t" style="left:1841.3px;top:659.1px;line-height:20px;color:#d4d4d4;transform:scaleX(0.9724);">e7849555</span>
<span class="t" style="left:568.3px;top:683.1px;line-height:20px;color:#d4d4d4;">アコーディオン開閉ロジック構造作成</span>
<span class="t" style="left:1646.7px;top:683.1px;line-height:20px;color:#d4d4d4;transform:scaleX(0.9500);">29 Sep 2022 15:16</span>
<span class="t" style="left:1761px;top:683.1px;line-height:20px;color:#d4d4d4;transform:scaleX(0.9732);">Haruo Seto</span>
<span class="t" style="left:1841.3px;top:683.1px;line-height:20px;color:#d4d4d4;transform:scaleX(0.9714);">7ae54c5d</span>
<span class="t" style="left:568.3px;top:707.1px;line-height:20px;color:#d4d4d4;transform:scaleX(1.0050);">ベースフォントの設定</span>
<span class="t" style="left:1646.7px;top:707.1px;line-height:20px;color:#d4d4d4;transform:scaleX(0.9500);">29 Sep 2022 10:37</span>
<span class="t" style="left:1761px;top:707.1px;line-height:20px;color:#d4d4d4;transform:scaleX(0.9732);">Haruo Seto</span>
<span class="t" style="left:1841.3px;top:707.1px;line-height:20px;color:#d4d4d4;transform:scaleX(0.9708);">74c74351</span>
<span class="t" style="left:568.3px;top:731.1px;line-height:20px;color:#d4d4d4;">基礎構造の構築</span>
<span class="t" style="left:1646.7px;top:731.1px;line-height:20px;color:#d4d4d4;transform:scaleX(0.9500);">29 Sep 2022 03:09</span>
<span class="t" style="left:1761px;top:731.1px;line-height:20px;color:#d4d4d4;transform:scaleX(0.9732);">Haruo Seto</span>
<span class="t" style="left:1841.3px;top:731.1px;line-height:20px;color:#d4d4d4;transform:scaleX(1.0169);">4f4f8abd</span>
<span class="t" style="left:568.3px;top:755.1px;line-height:20px;color:#d4d4d4;">ノーマライズファイルを更新・設定ファイルをFigmaと合わせる</span>
<span class="t" style="left:1646.7px;top:755.1px;line-height:20px;color:#d4d4d4;transform:scaleX(0.9500);">21 Sep 2022 02:34</span>
<span class="t" style="left:1761px;top:755.1px;line-height:20px;color:#d4d4d4;transform:scaleX(0.9732);">Haruo Seto</span>
<span class="t" style="left:1841.3px;top:755.1px;line-height:20px;color:#d4d4d4;transform:scaleX(1.0120);">553f2bf0</span>
<span class="t" style="left:568.3px;top:779.1px;line-height:20px;color:#d4d4d4;">クラス書き出し便利関数を改良</span>
<span class="t" style="left:1646.7px;top:779.1px;line-height:20px;color:#d4d4d4;transform:scaleX(0.9500);">21 Sep 2022 02:31</span>
<span class="t" style="left:1761px;top:779.1px;line-height:20px;color:#d4d4d4;transform:scaleX(0.9732);">Haruo Seto</span>
<span class="t" style="left:1841.3px;top:779.1px;line-height:20px;color:#d4d4d4;">0cb4ddc7</span>
<span class="t" style="left:568.3px;top:803.1px;line-height:20px;color:#d4d4d4;">許可ワード追加</span>
<span class="t" style="left:1646.7px;top:803.1px;line-height:20px;color:#d4d4d4;transform:scaleX(0.9500);">21 Sep 2022 02:30</span>
<span class="t" style="left:1761px;top:803.1px;line-height:20px;color:#d4d4d4;transform:scaleX(0.9732);">Haruo Seto</span>
<span class="t" style="left:1841.3px;top:803.1px;line-height:20px;color:#d4d4d4;transform:scaleX(0.9868);">07f46877</span>
<span class="t" style="left:568.3px;top:827.1px;line-height:20px;color:#d4d4d4;transform:scaleX(0.9872);">css クラスの自動生成機能の修正</span>
<span class="t" style="left:1646.7px;top:827.1px;line-height:20px;color:#d4d4d4;transform:scaleX(0.9500);">17 Sep 2022 14:09</span>
<span class="t" style="left:1761px;top:827.1px;line-height:20px;color:#d4d4d4;transform:scaleX(0.9732);">Haruo Seto</span>
<span class="t" style="left:1841.3px;top:827.1px;line-height:20px;color:#d4d4d4;transform:scaleX(0.9791);">79f1e28e</span>
<span class="t" style="left:568.3px;top:851.1px;line-height:20px;color:#d4d4d4;transform:scaleX(1.0420);">typo の lint</span>
<span class="t" style="left:1646.7px;top:851.1px;line-height:20px;color:#d4d4d4;transform:scaleX(0.9500);">17 Sep 2022 13:56</span>
<span class="t" style="left:1761px;top:851.1px;line-height:20px;color:#d4d4d4;transform:scaleX(0.9732);">Haruo Seto</span>
<span class="t" style="left:1841.3px;top:851.1px;line-height:20px;color:#d4d4d4;transform:scaleX(0.9830);">725ef210</span>
<span class="t" style="left:568.3px;top:875.1px;line-height:20px;color:#d4d4d4;transform:scaleX(1.0097);">prettier-stylesheet を quiet に</span>
<span class="t" style="left:1646.7px;top:875.1px;line-height:20px;color:#d4d4d4;transform:scaleX(0.9500);">17 Sep 2022 12:00</span>
<span class="t" style="left:1761px;top:875.1px;line-height:20px;color:#d4d4d4;transform:scaleX(0.9732);">Haruo Seto</span>
<span class="t" style="left:1841.3px;top:875.1px;line-height:20px;color:#d4d4d4;transform:scaleX(0.9931);">2cd989b4</span>
<span class="t" style="left:568.3px;top:899.1px;line-height:20px;color:#d4d4d4;">チェック用スクリプト</span>
<span class="t" style="left:1646.7px;top:899.1px;line-height:20px;color:#d4d4d4;transform:scaleX(0.9585);">17 Sep 2022 11:57</span>
<span class="t" style="left:1761px;top:899.1px;line-height:20px;color:#d4d4d4;transform:scaleX(0.9732);">Haruo Seto</span>
<span class="t" style="left:1841.3px;top:899.1px;line-height:20px;color:#d4d4d4;">0f69d055</span>
<span class="t" style="left:568.3px;top:923.1px;line-height:20px;color:#d4d4d4;">説明文追加</span>
<span class="t" style="left:1646.7px;top:923.1px;line-height:20px;color:#d4d4d4;transform:scaleX(0.9585);">17 Sep 2022 11:52</span>
<span class="t" style="left:1761px;top:923.1px;line-height:20px;color:#d4d4d4;transform:scaleX(0.9732);">Haruo Seto</span>
<span class="t" style="left:1841.3px;top:923.1px;line-height:20px;color:#d4d4d4;">97363f3d</span>
<span class="t" style="left:568.3px;top:947.1px;line-height:20px;color:#d4d4d4;">スクリプト修正</span>
<span class="t" style="left:1646.7px;top:947.1px;line-height:20px;color:#d4d4d4;transform:scaleX(0.9585);">17 Sep 2022 11:52</span>
<span class="t" style="left:1761px;top:947.1px;line-height:20px;color:#d4d4d4;transform:scaleX(0.9732);">Haruo Seto</span>
<span class="t" style="left:1841.3px;top:947.1px;line-height:20px;color:#d4d4d4;transform:scaleX(0.9639);">17a13c15</span>
<span class="t" style="left:568.3px;top:971.1px;line-height:20px;color:#d4d4d4;">スクリプト修正</span>
<span class="t" style="left:1646.7px;top:971.1px;line-height:20px;color:#d4d4d4;transform:scaleX(0.9585);">17 Sep 2022 11:47</span>
<span class="t" style="left:1761px;top:971.1px;line-height:20px;color:#d4d4d4;transform:scaleX(0.9732);">Haruo Seto</span>
<span class="t" style="left:1841.3px;top:971.1px;line-height:20px;color:#d4d4d4;transform:scaleX(0.9870);">9b892886</span>
<span class="t" style="left:568.3px;top:995.1px;line-height:20px;color:#d4d4d4;transform:scaleX(1.0647);">lint</span>
<span class="t" style="left:1646.7px;top:995.1px;line-height:20px;color:#d4d4d4;transform:scaleX(0.9500);">17 Sep 2022 03:00</span>
<span class="t" style="left:1761px;top:995.1px;line-height:20px;color:#d4d4d4;transform:scaleX(0.9732);">Haruo Seto</span>
<span class="t" style="left:1841.3px;top:995.1px;line-height:20px;color:#d4d4d4;transform:scaleX(0.9947);">23e361df</span>
<span class="t" style="left:568.3px;top:1019.1px;line-height:20px;color:#d4d4d4;">ツール改修</span>
<span class="t" style="left:1646.7px;top:1019.1px;line-height:20px;color:#d4d4d4;transform:scaleX(0.9500);">17 Sep 2022 02:50</span>
<span class="t" style="left:1761px;top:1019.1px;line-height:20px;color:#d4d4d4;transform:scaleX(0.9732);">Haruo Seto</span>
<span class="t" style="left:1841.3px;top:1019.1px;line-height:20px;color:#d4d4d4;transform:scaleX(0.9819);">1502d0c8</span>
<div class="ref" style="left:568.3px;top:168.3px;width:96.5px;border-color:#585858"><i style="background:#d9008f"></i></div>
<svg style="left:572.8px;top:171.8px;" width="10" height="13" viewBox="0 0 10 13"><g fill="none" stroke="#1c1c1c" stroke-width="1.050"><circle cx="2.800" cy="2.200" r="1.300"/><circle cx="2.800" cy="10.800" r="1.300"/><circle cx="7.600" cy="3.800" r="1.300"/><path d="M2.800 3.500v6M7.600 5.100c0 2.400-4.800 1.800-4.800 4.400"/></g></svg>
<span class="t" style="left:592.5px;top:169.2px;line-height:20px;font-size:12.5px;color:#e6e6e6;transform:scaleX(0.9625);">origin/HEAD</span>
<div class="ref" style="left:670.5px;top:168.3px;width:107.2px;border-color:#585858"><i style="background:#d9008f"></i></div>
<svg style="left:675px;top:171.8px;" width="10" height="13" viewBox="0 0 10 13"><g fill="none" stroke="#1c1c1c" stroke-width="1.050"><circle cx="2.800" cy="2.200" r="1.300"/><circle cx="2.800" cy="10.800" r="1.300"/><circle cx="7.600" cy="3.800" r="1.300"/><path d="M2.800 3.500v6M7.600 5.100c0 2.400-4.800 1.800-4.800 4.400"/></g></svg>
<span class="t" style="left:693.6px;top:169.2px;line-height:20px;font-size:12.5px;color:#e6e6e6;">origin/develop</span>
<div class="ref" style="left:568.3px;top:192.3px;width:97.5px;border-color:#585858"><i style="background:#00d90a"></i></div>
<svg style="left:572.8px;top:195.8px;" width="10" height="13" viewBox="0 0 10 13"><g fill="none" stroke="#1c1c1c" stroke-width="1.050"><circle cx="2.800" cy="2.200" r="1.300"/><circle cx="2.800" cy="10.800" r="1.300"/><circle cx="7.600" cy="3.800" r="1.300"/><path d="M2.800 3.500v6M7.600 5.100c0 2.400-4.800 1.800-4.800 4.400"/></g></svg>
<span class="t" style="left:592.5px;top:193.2px;line-height:20px;font-size:12.5px;color:#e6e6e6;transform:scaleX(0.9633);">main</span>
<span class="t" style="left:629.8px;top:193.2px;line-height:20px;font-size:12.5px;color:#e6e6e6;font-style:italic;transform:scaleX(0.9615);">origin</span>
<div class="b" style="left:623.3px;top:193.3px;width:1px;height:18px;background:#585858;"></div>
<div class="ref" style="left:671.2px;top:192.3px;width:53.6px;border-color:#585858"><i style="background:#00d90a"></i></div>
<svg style="left:674.7px;top:195.8px;" width="12" height="12" viewBox="0 0 12 12"><g fill="none" stroke="#1c1c1c" stroke-width="1.050"><path d="M1 1.200h4.600l5.700 5.700-4.500 4.500L1 5.700z" stroke-linejoin="round"/><circle cx="3.600" cy="3.800" r=".800"/></g></svg>
<span class="t" style="left:694.7px;top:193.2px;line-height:20px;font-size:12.5px;color:#e6e6e6;transform:scaleX(0.8881);">2.2.0</span>
<svg style="left:567.5px;top:245px;" width="11" height="11" viewBox="0 0 11 11"><circle cx="5.500" cy="5.500" r="4.200" fill="none" stroke="#0085d9" stroke-width="1.900"/></svg>
<div class="ref" style="left:583px;top:240.2px;width:75px;border-color:#0085d9"><i style="background:#0085d9"></i></div>
<svg style="left:587.5px;top:243.7px;" width="10" height="13" viewBox="0 0 10 13"><g fill="none" stroke="#1c1c1c" stroke-width="1.050"><circle cx="2.800" cy="2.200" r="1.300"/><circle cx="2.800" cy="10.800" r="1.300"/><circle cx="7.600" cy="3.800" r="1.300"/><path d="M2.800 3.500v6M7.600 5.100c0 2.400-4.800 1.800-4.800 4.400"/></g></svg>
<span class="t" style="left:607.7px;top:241.1px;line-height:20px;font-size:12.5px;color:#e6e6e6;font-weight:bold;transform:scaleX(0.9418);">develop</span>
<div class="ref" style="left:568.3px;top:658.3px;width:200.4px;border-color:#585858"><i style="background:#d9008f"></i></div>
<svg style="left:572.8px;top:661.8px;" width="10" height="13" viewBox="0 0 10 13"><g fill="none" stroke="#1c1c1c" stroke-width="1.050"><circle cx="2.800" cy="2.200" r="1.300"/><circle cx="2.800" cy="10.800" r="1.300"/><circle cx="7.600" cy="3.800" r="1.300"/><path d="M2.800 3.500v6M7.600 5.100c0 2.400-4.800 1.800-4.800 4.400"/></g></svg>
<span class="t" style="left:592.3px;top:659.2px;line-height:20px;font-size:12.5px;color:#e6e6e6;transform:scaleX(0.9848);">origin/feature/package-remodel</span>
<span class="t" style="left:575.7px;top:296.1px;line-height:20px;color:#d4d4d4;transform:scaleX(0.9817);"><b>Commit: </b>59aaf0e67efb00651e59f10b5caf660dddd8c081</span>
<span class="t" style="left:575.7px;top:314.1px;line-height:20px;color:#d4d4d4;transform:scaleX(0.9774);"><b>Parents: </b><a>9c8226fbceb331870d7af53b3b6367bebed7cfc1</a></span>
<span class="t" style="left:575.7px;top:332.1px;line-height:20px;color:#d4d4d4;transform:scaleX(0.9953);"><b>Author: </b>Haruo Seto &lt;<a>haruo@ctime.jp</a>&gt;</span>
<span class="t" style="left:575.7px;top:350.1px;line-height:20px;color:#d4d4d4;"><b>Committer: </b>Haruo Seto &lt;<a>haruo@ctime.jp</a>&gt;</span>
<span class="t" style="left:575.7px;top:368.1px;line-height:20px;color:#d4d4d4;transform:scaleX(0.9797);"><b>Date: </b>Thu Apr 06 2023 14:18:36 GMT+0900 (日本標準時)</span>
<span class="t" style="left:575.7px;top:408.1px;line-height:20px;color:#d4d4d4;">code-gen の使い方説明追加</span>
<svg style="left:1234px;top:298px;" width="9" height="11" viewBox="0 0 9 11"><path d="M1.200 0h4.300L9 3.500v6.300a1.200 1.200 0 0 1-1.200 1.200H1.200A1.200 1.200 0 0 1 0 9.800V1.200A1.200 1.200 0 0 1 1.200 0z" fill="#8c8c8c"/><path d="M5.500 0v3.500H9" fill="none" stroke="#2a2a2a" stroke-width=".800"/></svg>
<span class="t" style="left:1253.2px;top:294.2px;line-height:20px;color:#e2c08d;transform:scaleX(0.9172);">README.md</span>
<span class="t" style="left:1333px;top:294.2px;line-height:20px;color:#d4d4d4;transform:scaleX(0.9561);">( <span style="color:#6db36d">+92</span> | <span style="color:#d0453b">-0</span> )</span>
<svg style="left:1887.5px;top:296px;" width="13" height="13" viewBox="0 0 13 13"><path d="M1 1l11 11M12 1 1 12" stroke="#a4a4a4" stroke-width="2.700"/></svg>
<svg style="left:1884px;top:324px;" width="20" height="12.5" viewBox="0 0 20 12.5"><g fill="none" stroke="#b0b0b0" stroke-width="1.700"><path d="M4 .500 1 6.250l3 5.750M16 .500l3 5.750-3 5.750"/><circle cx="9.300" cy="5.300" r="2.700" stroke-width="1.400"/><path d="M11.200 7.300l2.500 2.900" stroke-width="1.500"/></g></svg>
<div class="b" style="left:1882.3px;top:346px;width:23.4px;height:47.5px;background:#353535;border-radius:4px;"></div>
<div class="b" style="left:1882.3px;top:346px;width:23.4px;height:24px;background:#404040;border-radius:4px 4px 0 0;"></div>
<svg style="left:1882px;top:346px;" width="24" height="24" viewBox="0 0 24 24"><rect x="4" y="5.2" width="2" height="1.500" fill="#b0b0b0"/><rect x="7.3" y="5.2" width="8.7" height="1.500" fill="#b0b0b0"/><rect x="6" y="9.2" width="2" height="1.500" fill="#b0b0b0"/><rect x="9.5" y="9.2" width="8.5" height="1.500" fill="#b0b0b0"/><rect x="8" y="13.2" width="2" height="1.500" fill="#b0b0b0"/><rect x="11.5" y="13.2" width="8.5" height="1.500" fill="#b0b0b0"/><rect x="6" y="17.2" width="2" height="1.500" fill="#b0b0b0"/><rect x="9.5" y="17.2" width="8.5" height="1.500" fill="#b0b0b0"/></svg>
<svg style="left:1882px;top:370px;" width="24" height="24" viewBox="0 0 24 24"><rect x="4" y="5.2" width="2" height="1.500" fill="#b0b0b0"/><rect x="7.300" y="5.2" width="12.700" height="1.500" fill="#b0b0b0"/><rect x="4" y="9.2" width="2" height="1.500" fill="#b0b0b0"/><rect x="7.300" y="9.2" width="12.700" height="1.500" fill="#b0b0b0"/><rect x="4" y="13.2" width="2" height="1.500" fill="#b0b0b0"/><rect x="7.300" y="13.2" width="12.700" height="1.500" fill="#b0b0b0"/><rect x="4" y="17.2" width="2" height="1.500" fill="#b0b0b0"/><rect x="7.300" y="17.2" width="12.700" height="1.500" fill="#b0b0b0"/></svg>
<svg style="left:0;top:0" width="1920" height="1028" viewBox="0 0 1920 1028"><defs><clipPath id="gc"><rect x="485" y="142" width="80" height="886"/></clipPath></defs><g clip-path="url(#gc)"><g transform="translate(0 .700)"><path d="M501 154V250" fill="none" stroke="#1f1f1f" stroke-opacity=".750" stroke-width="4"/><path d="M517 178V226C517 245.2 501 230.8 501 250" fill="none" stroke="#1f1f1f" stroke-opacity=".750" stroke-width="4"/><path d="M517 178C517 197.2 533 182.8 533 202" fill="none" stroke="#1f1f1f" stroke-opacity=".750" stroke-width="4"/><path d="M533 202V226C533 245.2 517 230.8 517 250V1030" fill="none" stroke="#1f1f1f" stroke-opacity=".750" stroke-width="4"/><path d="M533 202C533 221.2 549 206.8 549 226" fill="none" stroke="#1f1f1f" stroke-opacity=".750" stroke-width="4"/><path d="M549 226C549 245.2 501 230.8 501 250" fill="none" stroke="#1f1f1f" stroke-opacity=".750" stroke-width="4"/><path d="M501 250V1030" fill="none" stroke="#1f1f1f" stroke-opacity=".750" stroke-width="4"/><path d="M501 250C501 269.2 533 254.8 533 274V1030" fill="none" stroke="#1f1f1f" stroke-opacity=".750" stroke-width="4"/><path d="M549 668V1030" fill="none" stroke="#1f1f1f" stroke-opacity=".750" stroke-width="4"/><path d="M501 154V250" fill="none" stroke="#808080" stroke-width="2"/><path d="M517 178V226C517 245.2 501 230.8 501 250" fill="none" stroke="#d9008f" stroke-width="2"/><path d="M517 178C517 197.2 533 182.8 533 202" fill="none" stroke="#00d90a" stroke-width="2"/><path d="M533 202V226C533 245.2 517 230.8 517 250V1030" fill="none" stroke="#00d90a" stroke-width="2"/><path d="M533 202C533 221.2 549 206.8 549 226" fill="none" stroke="#d98500" stroke-width="2"/><path d="M549 226C549 245.2 501 230.8 501 250" fill="none" stroke="#d98500" stroke-width="2"/><path d="M501 250V1030" fill="none" stroke="#0085d9" stroke-width="2"/><path d="M501 250C501 269.2 533 254.8 533 274V1030" fill="none" stroke="#a300d9" stroke-width="2"/><path d="M549 668V1030" fill="none" stroke="#d9008f" stroke-width="2"/><circle cx="501" cy="154" r="4" fill="#1f1f1f" stroke="#808080" stroke-width="2"/><circle cx="501" cy="250" r="4" fill="#0085d9" stroke="#1f1f1f" stroke-opacity=".750" stroke-width="1"/><circle cx="517" cy="178" r="4" fill="#d9008f" stroke="#1f1f1f" stroke-opacity=".750" stroke-width="1"/><circle cx="533" cy="202" r="4" fill="#00d90a" stroke="#1f1f1f" stroke-opacity=".750" stroke-width="1"/><circle cx="549" cy="226" r="4" fill="#d98500" stroke="#1f1f1f" stroke-opacity=".750" stroke-width="1"/><circle cx="533" cy="274" r="4" fill="#a300d9" stroke="#1f1f1f" stroke-opacity=".750" stroke-width="1"/><circle cx="533" cy="548" r="4" fill="#a300d9" stroke="#1f1f1f" stroke-opacity=".750" stroke-width="1"/><circle cx="533" cy="572" r="4" fill="#a300d9" stroke="#1f1f1f" stroke-opacity=".750" stroke-width="1"/><circle cx="533" cy="596" r="4" fill="#a300d9" stroke="#1f1f1f" stroke-opacity=".750" stroke-width="1"/><circle cx="533" cy="620" r="4" fill="#a300d9" stroke="#1f1f1f" stroke-opacity=".750" stroke-width="1"/><circle cx="533" cy="644" r="4" fill="#a300d9" stroke="#1f1f1f" stroke-opacity=".750" stroke-width="1"/><circle cx="549" cy="668" r="4" fill="#d9008f" stroke="#1f1f1f" stroke-opacity=".750" stroke-width="1"/><circle cx="549" cy="692" r="4" fill="#d9008f" stroke="#1f1f1f" stroke-opacity=".750" stroke-width="1"/><circle cx="549" cy="716" r="4" fill="#d9008f" stroke="#1f1f1f" stroke-opacity=".750" stroke-width="1"/><circle cx="549" cy="740" r="4" fill="#d9008f" stroke="#1f1f1f" stroke-opacity=".750" stroke-width="1"/><circle cx="549" cy="764" r="4" fill="#d9008f" stroke="#1f1f1f" stroke-opacity=".750" stroke-width="1"/><circle cx="549" cy="788" r="4" fill="#d9008f" stroke="#1f1f1f" stroke-opacity=".750" stroke-width="1"/><circle cx="549" cy="812" r="4" fill="#d9008f" stroke="#1f1f1f" stroke-opacity=".750" stroke-width="1"/><circle cx="549" cy="836" r="4" fill="#d9008f" stroke="#1f1f1f" stroke-opacity=".750" stroke-width="1"/><circle cx="549" cy="860" r="4" fill="#d9008f" stroke="#1f1f1f" stroke-opacity=".750" stroke-width="1"/><circle cx="549" cy="884" r="4" fill="#d9008f" stroke="#1f1f1f" stroke-opacity=".750" stroke-width="1"/><circle cx="549" cy="908" r="4" fill="#d9008f" stroke="#1f1f1f" stroke-opacity=".750" stroke-width="1"/><circle cx="549" cy="932" r="4" fill="#d9008f" stroke="#1f1f1f" stroke-opacity=".750" stroke-width="1"/><circle cx="549" cy="956" r="4" fill="#d9008f" stroke="#1f1f1f" stroke-opacity=".750" stroke-width="1"/><circle cx="549" cy="980" r="4" fill="#d9008f" stroke="#1f1f1f" stroke-opacity=".750" stroke-width="1"/><circle cx="549" cy="1004" r="4" fill="#d9008f" stroke="#1f1f1f" stroke-opacity=".750" stroke-width="1"/><circle cx="549" cy="1028" r="4" fill="#d9008f" stroke="#1f1f1f" stroke-opacity=".750" stroke-width="1"/></g></g></svg>
<div class="b" style="left:0px;top:1028px;width:1920px;height:22px;background:#181818;border-top:1px solid #2b2b2b;"></div>
<div class="b" style="left:0px;top:1029px;width:34px;height:21px;background:#0078d4;"></div>
<svg style="left:10px;top:1032.8px;" width="14" height="14" viewBox="0 0 16 16"><path fill="#ffffff" fill-rule="evenodd" d="M12.904 9.57L8.928 5.596l3.976-3.976-.619-.62L8 5.286v.619l4.285 4.285.62-.619zM3 5.62l4.072 4.072L3 13.763l.619.618L8 10v-.619L3.62 5 3 5.620z"/></svg>
<svg style="left:40.5px;top:1031.8px;" width="14.5" height="14.5" viewBox="0 0 24 24"><path fill="#cccccc" fill-rule="evenodd" d="M21.007 8.222A3.738 3.738 0 0 0 15.045 5.200a3.737 3.737 0 0 0 1.156 6.583 2.988 2.988 0 0 1-2.668 1.670h-2.990a4.456 4.456 0 0 0-2.989 1.165V7.400a3.737 3.737 0 1 0-1.494 0v9.117a3.776 3.776 0 1 0 1.816.099 2.990 2.990 0 0 1 2.668-1.667h2.990a4.484 4.484 0 0 0 4.223-3.039 3.736 3.736 0 0 0 3.250-3.687zM4.565 3.738a2.242 2.242 0 1 1 4.484 0 2.242 2.242 0 0 1-4.484 0zm4.484 16.441a2.242 2.242 0 1 1-4.484 0 2.242 2.242 0 0 1 4.484 0zm8.221-9.715a2.242 2.242 0 1 1 0-4.485 2.242 2.242 0 0 1 0 4.485z"/></svg>
<span class="t" style="left:57.3px;top:1030.1px;line-height:20px;font-size:12px;transform:scaleX(1.0060);">develop*</span>
<svg style="left:111px;top:1031.8px;" width="14.5" height="14.5" viewBox="0 0 16 16"><path fill="#cccccc" fill-rule="evenodd" d="M2.006 8.267L.78 9.5 0 8.73l2.09-2.07.76.01 2.09 2.12-.76.76-1.167-1.18a5 5 0 0 0 9.4 1.983l.813.597a6 6 0 0 1-11.22-2.683zm10.99-.466L11.76 6.55l-.76.76 2.09 2.11.76.01 2.09-2.07-.75-.76-1.194 1.18a6 6 0 0 0-11.11-2.92l.81.594a5 5 0 0 1 9.3 2.346z"/></svg>
<span class="t" style="left:128.3px;top:1030.1px;line-height:20px;font-size:12px;transform:scaleX(0.8267);">3<span class="ar">↓</span> 0<span class="ar">↑</span></span>
<svg style="left:169.2px;top:1031.8px;" width="14.5" height="14.5" viewBox="0 0 16 16"><path fill="#cccccc" fill-rule="evenodd" d="M8.600 1c1.600.100 3.100.900 4.200 2 1.300 1.400 2 3.100 2 5.100 0 1.600-.600 3.100-1.600 4.400-1 1.200-2.400 2.100-4 2.400-1.600.300-3.200.100-4.600-.700-1.400-.800-2.500-2-3.100-3.500C.900 9.200.800 7.500 1.300 6c.500-1.600 1.400-2.900 2.800-3.800C5.400 1.300 7 .900 8.600 1zm.500 12.900c1.300-.300 2.500-1 3.400-2.100.800-1.100 1.300-2.400 1.200-3.800 0-1.600-.600-3.200-1.700-4.300-1-1-2.200-1.600-3.600-1.700-1.300-.100-2.700.200-3.800 1-1.100.800-1.900 1.900-2.300 3.300-.400 1.300-.400 2.700.200 4 .600 1.300 1.500 2.300 2.700 3 1.200.700 2.600.900 3.900.600zM7.900 7.500L10.300 5l.700.700-2.400 2.500 2.400 2.500-.700.700-2.400-2.500-2.400 2.500-.700-.700 2.400-2.500-2.400-2.500.700-.700 2.400 2.500z"/></svg>
<span class="t" style="left:186.7px;top:1030.1px;line-height:20px;font-size:12px;transform:scaleX(0.9869);">0</span>
<svg style="left:196.3px;top:1031.8px;" width="14.5" height="14.5" viewBox="0 0 16 16"><path fill="#cccccc" fill-rule="evenodd" d="M7.560 1h.880l6.540 12.260-.440.740H1.440L1 13.260 7.560 1zM8 2.280L2.280 13H13.700L8 2.280zM8.625 12v-1h-1.250v1h1.250zm-1.250-2V6h1.250v4h-1.250z"/></svg>
<span class="t" style="left:214px;top:1030.1px;line-height:20px;font-size:12px;transform:scaleX(0.9869);">0</span>
<svg style="left:235.9px;top:1031.8px;" width="14.5" height="14.5" viewBox="0 0 16 16"><path fill="#cccccc" fill-rule="evenodd" d="M2.998 5.580a5.550 5.550 0 0 1 1.620-3.880l-.710-.700a6.450 6.450 0 0 0 0 9.160l.710-.700a5.550 5.550 0 0 1-1.620-3.880zm1.060 0a4.420 4.420 0 0 0 1.320 3.170l.710-.710a3.270 3.270 0 0 1-.760-1.120 3.450 3.450 0 0 1 0-2.670 3.220 3.220 0 0 1 .760-1.130l-.710-.710a4.460 4.460 0 0 0-1.320 3.170zm7.650 3.210l-.710-.710c.330-.320.590-.704.760-1.130a3.449 3.449 0 0 0 0-2.670 3.220 3.220 0 0 0-.760-1.130l.710-.700a4.468 4.468 0 0 1 0 6.340zM13.068 1l-.710.710a5.430 5.430 0 0 1 0 7.740l.710.710a6.450 6.450 0 0 0 0-9.160zM9.993 5.430a1.500 1.500 0 0 1-.245.980 2 2 0 0 1-.270.230l3.440 7.730-.920.400-.770-1.730h-5.540l-.770 1.730-.920-.400 3.440-7.730a1.520 1.520 0 0 1-.330-1.630 1.550 1.550 0 0 1 .560-.680 1.500 1.500 0 0 1 2.325 1.100zm-1.595-.340a.520.520 0 0 0-.250.140.520.520 0 0 0-.110.220.480.480 0 0 0 0 .290c.040.090.102.170.180.230a.540.540 0 0 0 .280.080.510.510 0 0 0 .500-.500.540.540 0 0 0-.080-.280.580.580 0 0 0-.230-.180.480.480 0 0 0-.290 0zm.230 2.050h-.270l-.870 1.940h2l-.860-1.940zm2.200 4.940l-.890-2h-2.880l-.890 2h4.660z"/></svg>
<span class="t" style="left:253.4px;top:1030.1px;line-height:20px;font-size:12px;transform:scaleX(0.9869);">0</span>
<svg style="left:276.3px;top:1031.7px;" width="14" height="14" viewBox="0 0 14 14"><g fill="none" stroke="#cccccc" stroke-width="1.450"><path d="M.900 8.300C1.600 5.300 4.200 3.600 8.400 3.600V1.300l4.800 3.900-4.800 3.900V6.700C5 6.700 2.800 7 .900 8.300z" stroke-linejoin="round"/><circle cx="5.300" cy="11.300" r="1.900"/></g></svg>
<span class="t" style="left:293.3px;top:1030.1px;line-height:20px;font-size:12px;transform:scaleX(0.9412);">Live Share</span>
<span class="t" style="left:362.7px;top:1030.1px;line-height:20px;font-size:12px;transform:scaleX(0.9725);">Git Graph</span>
<svg style="left:430.8px;top:1032.7px;" width="12" height="12.5" viewBox="0 0 12 12.5"><g fill="#9a9a9a" stroke="#cccccc" stroke-width="1"><rect x=".500" y=".500" width="11" height="3.300" rx=".600"/><rect x=".500" y="4.600" width="11" height="3.300" rx=".600"/><rect x=".500" y="8.700" width="11" height="3.300" rx=".600"/></g><path d="M2 2.150h1.200M4 2.150h1.200M6 2.150h1.200M2 6.250h1.200M4 6.250h1.200M6 6.250h1.200M2 10.350h1.200M4 10.350h1.200M6 10.350h1.200" stroke="#303030" stroke-width="1.100"/></svg>
<span class="t" style="left:446.7px;top:1030.1px;line-height:20px;font-size:12px;transform:scaleX(0.9501);">Select Postgres Server</span>
<svg style="left:1890.9px;top:1032.1px;" width="14.5" height="14.5" viewBox="0 0 16 16"><path fill="#cccccc" fill-rule="evenodd" d="M13.377 10.573a7.630 7.630 0 0 1-.383-2.380V6.195a5.115 5.115 0 0 0-1.268-3.446 5.138 5.138 0 0 0-3.242-1.722c-.694-.072-1.400 0-2.070.227-.670.215-1.280.574-1.794 1.053a4.923 4.923 0 0 0-1.208 1.675 5.067 5.067 0 0 0-.431 2.022v2.200a7.610 7.610 0 0 1-.383 2.370L2 12.343l.479.658h3.505c0 .526.215 1.040.586 1.412.370.370.885.586 1.412.586.526 0 1.040-.215 1.411-.586s.587-.886.587-1.412h3.505l.478-.658-.586-1.770zm-4.690 3.147a.997.997 0 0 1-.705.299.997.997 0 0 1-.706-.300.997.997 0 0 1-.300-.705h1.999a.939.939 0 0 1-.287.706zm-5.515-1.710l.371-1.114a8.633 8.633 0 0 0 .443-2.691V6.004c0-.563.120-1.113.347-1.616.227-.514.550-.969.969-1.340.419-.382.910-.670 1.436-.837.538-.180 1.100-.240 1.650-.180a4.147 4.147 0 0 1 2.597 1.400 4.133 4.133 0 0 1 1.004 2.776v2.010c0 .909.144 1.818.443 2.691l.371 1.113h-9.630v-.012z"/></svg>
</body></html>
